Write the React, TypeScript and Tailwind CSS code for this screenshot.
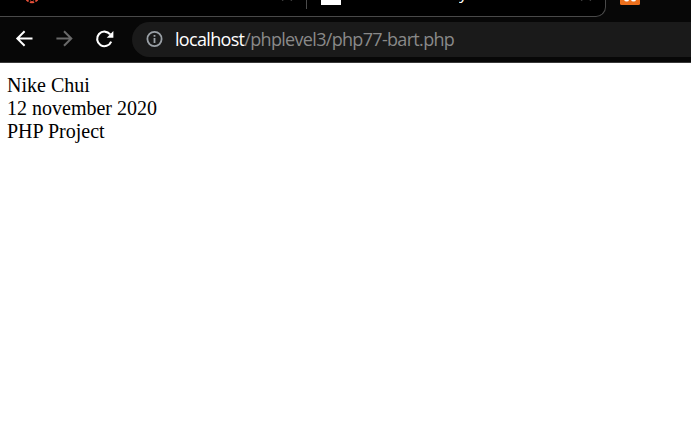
import type { ReactNode } from "react";

function CanvasMark() {
  return (
    <svg className="block" width="20" height="5" viewBox="0 0 20 5" fill="#e8503a">
      <path d="M4 0h2.5l.5 1.2-1.1.9L4 .6zM13.5 0H16v.6l-1.9 1.5-1.1-.9zM8 1.6l2-.5 2 .5.4 1.3-2.4.4-2.4-.4zM8.2 0h.8v.5h-.8zM11 0h.8v.5H11z" />
    </svg>
  );
}

function CloseEnd() {
  return (
    <svg className="block" width="12" height="3" viewBox="0 0 12 3" fill="none" stroke="#4a4a4a" strokeWidth="1.2">
      <path d="M3-1L1.2.6M9-1l1.8 1.6" />
    </svg>
  );
}

function ToolIcon({ children }: { children: ReactNode }) {
  return (
    <svg className="block size-6 shrink-0" viewBox="0 0 24 24" fill="none">
      {children}
    </svg>
  );
}

function TabStrip() {
  return (
    <div className="flex h-[17px] overflow-hidden bg-[#070707]">
      <div className="flex h-[17px] w-[606px] shrink-0 items-start rounded-br-[10px] border-r border-b border-[#494949] bg-black">
        <div className="ml-[22px] w-5"><CanvasMark /></div>
        <div className="ml-[239px] w-3"><CloseEnd /></div>
        <div className="ml-[13px] h-[9px] w-px bg-[#4b4b4b]" />
        <div className="ml-[14px] h-[5px] w-5 bg-white" />
        <div className="ml-[118px] h-4 w-[10px] overflow-hidden">
          <span className="-mt-[17px] block font-['Open_Sans',sans-serif] text-[17px] leading-5 text-white">y</span>
        </div>
        <div className="ml-[111px] w-3"><CloseEnd /></div>
      </div>
      <svg className="ml-[14px] block" width="20" height="5" viewBox="0 0 20 5">
        <path d="M0 0h20v3.5Q20 5 18.5 5h-17Q0 5 0 3.5z" fill="#ed701d" />
        <path d="M4 0h5q-.3 1.5-2.2 1.5T4 0zM11 0h5q-.3 1.5-2.4 1.5T11 0z" fill="#fff" />
      </svg>
    </div>
  );
}

function Toolbar() {
  return (
    <div className="flex h-[46px] items-start border-b border-[#393939] bg-[#070707] pt-[5px]">
      <div className="flex h-[34px] w-[132px] shrink-0 items-center gap-4 pl-[12px]">
        <ToolIcon>
          <path d="M20.5 11.5H5.2M12.6 4.2l-7.3 7.3 7.3 7.3" stroke="#fff" strokeWidth="2" />
        </ToolIcon>
        <ToolIcon>
          <path d="M4.4 11.5h15M12 4.2l7.3 7.3-7.3 7.3" stroke="#696969" strokeWidth="2" />
        </ToolIcon>
        <ToolIcon>
          <path d="M18.2 7.4A7.3 7.3 0 1 0 19.2 14.6" stroke="#fff" strokeWidth="2.1" />
          <path d="M21.4 4v6.7h-6.7z" fill="#fff" />
        </ToolIcon>
      </div>
      <div className="flex h-[35px] flex-1 items-center rounded-l-full bg-[#1a1a1a] pb-px pl-[14px]">
        <svg className="block shrink-0" width="17" height="16" viewBox="0 0 17 16" fill="none">
          <circle cx="8.5" cy="8" r="7.1" stroke="#9aa0a6" strokeWidth="1.8" />
          <path d="M8.5 7v5M8.5 4v1.8" stroke="#9aa0a6" strokeWidth="1.8" />
        </svg>
        <div className="-mt-px ml-[12px] whitespace-nowrap font-['Open_Sans',sans-serif] text-[18px] leading-6 tracking-[-0.68px] text-[#898989]">
          <span className="text-white">localhost</span>/phplevel3/php77-bart.php
        </div>
      </div>
    </div>
  );
}

export default function App() {
  return (
    <div className="flex h-[422px] w-[691px] flex-col overflow-hidden bg-white">
      <TabStrip />
      <Toolbar />
      <main className="flex-1 pt-[11px] pl-[7px] font-['Liberation_Serif',serif] text-[20px] leading-[23px] text-black">
        <p>Nike Chui</p>
        <p>12 november 2020</p>
        <p>PHP Project</p>
      </main>
    </div>
  );
}
